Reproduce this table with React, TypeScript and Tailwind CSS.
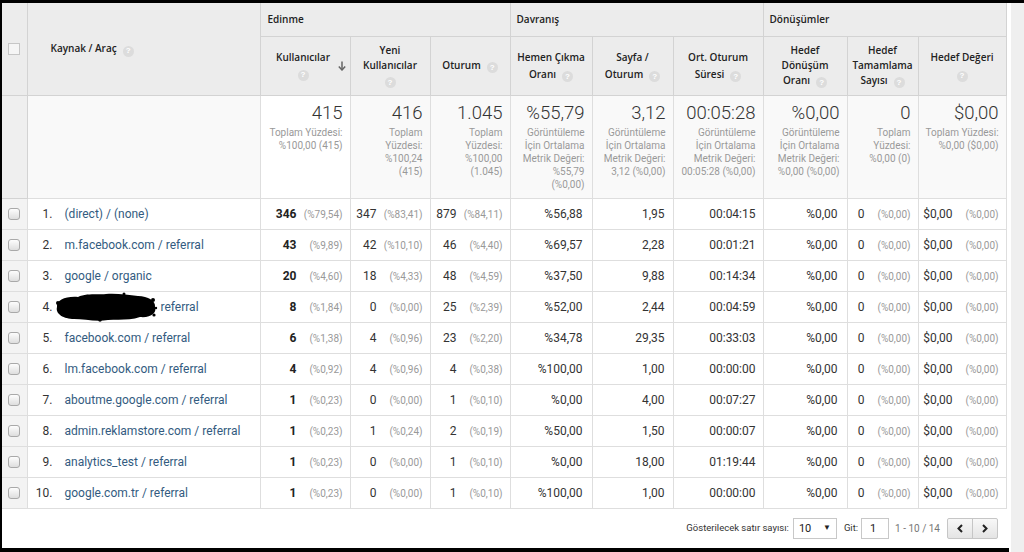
import React from "react";

type Row = {
  n: number;
  source: string | null;
  users: [string, string];
  newUsers: [string, string];
  sessions: [string, string];
  bounce: string;
  pages: string;
  duration: string;
};

const rows: Row[] = [
  { n: 1, source: "(direct) / (none)", users: ["346", "(%79,54)"], newUsers: ["347", "(%83,41)"], sessions: ["879", "(%84,11)"], bounce: "%56,88", pages: "1,95", duration: "00:04:15" },
  { n: 2, source: "m.facebook.com / referral", users: ["43", "(%9,89)"], newUsers: ["42", "(%10,10)"], sessions: ["46", "(%4,40)"], bounce: "%69,57", pages: "2,28", duration: "00:01:21" },
  { n: 3, source: "google / organic", users: ["20", "(%4,60)"], newUsers: ["18", "(%4,33)"], sessions: ["48", "(%4,59)"], bounce: "%37,50", pages: "9,88", duration: "00:14:34" },
  { n: 4, source: null, users: ["8", "(%1,84)"], newUsers: ["0", "(%0,00)"], sessions: ["25", "(%2,39)"], bounce: "%52,00", pages: "2,44", duration: "00:04:59" },
  { n: 5, source: "facebook.com / referral", users: ["6", "(%1,38)"], newUsers: ["4", "(%0,96)"], sessions: ["23", "(%2,20)"], bounce: "%34,78", pages: "29,35", duration: "00:33:03" },
  { n: 6, source: "lm.facebook.com / referral", users: ["4", "(%0,92)"], newUsers: ["4", "(%0,96)"], sessions: ["4", "(%0,38)"], bounce: "%100,00", pages: "1,00", duration: "00:00:00" },
  { n: 7, source: "aboutme.google.com / referral", users: ["1", "(%0,23)"], newUsers: ["0", "(%0,00)"], sessions: ["1", "(%0,10)"], bounce: "%0,00", pages: "4,00", duration: "00:07:27" },
  { n: 8, source: "admin.reklamstore.com / referral", users: ["1", "(%0,23)"], newUsers: ["1", "(%0,24)"], sessions: ["2", "(%0,19)"], bounce: "%50,00", pages: "1,50", duration: "00:00:07" },
  { n: 9, source: "analytics_test / referral", users: ["1", "(%0,23)"], newUsers: ["0", "(%0,00)"], sessions: ["1", "(%0,10)"], bounce: "%0,00", pages: "18,00", duration: "01:19:44" },
  { n: 10, source: "google.com.tr / referral", users: ["1", "(%0,23)"], newUsers: ["0", "(%0,00)"], sessions: ["1", "(%0,10)"], bounce: "%100,00", pages: "1,00", duration: "00:00:00" },
];

const totals = [
  { value: "415", lines: ["Toplam Yüzdesi:", "%100,00 (415)"], sorted: true },
  { value: "416", lines: ["Toplam", "Yüzdesi:", "%100,24", "(415)"] },
  { value: "1.045", lines: ["Toplam", "Yüzdesi:", "%100,00", "(1.045)"] },
  { value: "%55,79", lines: ["Görüntüleme", "İçin Ortalama", "Metrik Değeri:", "%55,79", "(%0,00)"] },
  { value: "3,12", lines: ["Görüntüleme", "İçin Ortalama", "Metrik Değeri:", "3,12 (%0,00)"] },
  { value: "00:05:28", lines: ["Görüntüleme", "İçin Ortalama", "Metrik Değeri:", "00:05:28 (%0,00)"] },
  { value: "%0,00", lines: ["Görüntüleme", "İçin Ortalama", "Metrik Değeri:", "%0,00 (%0,00)"] },
  { value: "0", lines: ["Toplam", "Yüzdesi:", "%0,00 (0)"] },
  { value: "$0,00", lines: ["Toplam Yüzdesi:", "%0,00 ($0,00)"] },
];

function Help() {
  return (
    <span className="ml-[6px] inline-flex h-[11px] w-[11px] items-center justify-center rounded-full bg-[#dcdcdc] align-[-1px] font-['Liberation_Sans',sans-serif] text-[8px] font-bold leading-none text-white">
      ?
    </span>
  );
}

function RowCheckbox() {
  return (
    <span className="block h-[12px] w-[12px] rounded-[3px] border border-[#a9a9a9] bg-[linear-gradient(180deg,#fdfdfd_0%,#dedede_100%)]" />
  );
}

function ValuePct({ value, pct, bold }: { value: string; pct: string; bold?: boolean }) {
  return (
    <div className="flex items-baseline justify-end pr-[7px]">
      <span className={bold ? "font-bold text-[#222]" : "text-[#333]"}>{value}</span>
      <span className="w-[46px] text-right text-[10px] text-[#999]">{pct}</span>
    </div>
  );
}

function Redacted() {
  return (
    <svg width="104" height="30" viewBox="0 0 104 30" className="ml-[-11px] shrink-0">
      <path
        d="M3 15 C2 8, 12 4, 24 5 C32 1, 44 3, 52 2 C62 1, 74 3, 84 4 C94 4, 102 9, 101 15 C103 21, 97 26, 86 25 C76 29, 64 27, 54 28 C42 30, 30 27, 20 27 C10 27, 1 22, 3 15 Z"
        fill="#000"
      />
      <circle cx="4" cy="11" r="2" fill="#000" />
      <circle cx="99" cy="8" r="2" fill="#000" />
      <circle cx="100" cy="23" r="1.6" fill="#000" />
      <circle cx="46" cy="28" r="1.8" fill="#000" />
      <circle cx="70" cy="2" r="1.5" fill="#000" />
      <circle cx="102" cy="16" r="1.2" fill="#000" />
    </svg>
  );
}

function SortArrow() {
  return (
    <svg width="8" height="10" viewBox="0 0 8 10" className="shrink-0">
      <path d="M4 0.5 V9" stroke="#666" strokeWidth="1.5" />
      <path d="M0.8 5.6 L4 9 L7.2 5.6" stroke="#666" strokeWidth="1.5" fill="none" />
    </svg>
  );
}

const th = "border-r border-b border-[#d3d3d3] bg-[#ececec] font-['Open_Sans',sans-serif] text-[10px] font-semibold text-[#222]";
const sub = "border-r border-b border-[#d3d3d3] bg-[#ececec] px-1 text-center align-middle font-['Open_Sans',sans-serif] text-[10px] font-semibold leading-[15px] text-[#222]";
const td = "h-[31px] border-r border-b border-[#dedede] p-0 align-middle";

export default function App() {
  return (
    <div className="flex h-[552px] w-[1024px] items-start overflow-hidden bg-black pt-[3px] pl-[2px] font-['Roboto',sans-serif]">
      <div className="flex h-[545px] w-[1007px] flex-col bg-white">
        <table className="w-[1004px] table-fixed border-collapse">
          <colgroup>
            <col className="w-[25px]" />
            <col className="w-[233px]" />
            <col className="w-[90px]" />
            <col className="w-[80px]" />
            <col className="w-[80px]" />
            <col className="w-[82px]" />
            <col className="w-[81px]" />
            <col className="w-[90px]" />
            <col className="w-[84px]" />
            <col className="w-[71px]" />
            <col className="w-[88px]" />
          </colgroup>
          <thead>
            <tr className="h-[33px]">
              <th rowSpan={2} className={`${th} p-0 align-middle`}>
                <span className="mx-auto block h-[12px] w-[12px] border border-[#c6c6c6] bg-[#f5f5f5]" />
              </th>
              <th rowSpan={2} className={`${th} pl-[23px] text-left align-middle`}>
                Kaynak / Araç
                <Help />
              </th>
              <th colSpan={3} className={`${th} pl-[7px] text-left align-middle`}>Edinme</th>
              <th colSpan={3} className={`${th} pl-[6px] text-left align-middle`}>Davranış</th>
              <th colSpan={3} className={`${th} pl-[6px] text-left align-middle`}>Dönüşümler</th>
            </tr>
            <tr className="h-[59px]">
              <th className={`${sub} pr-[4px]`}>
                <div className="flex items-center">
                  <div className="flex-1 pl-[4px]">
                    Kullanıcılar
                    <br />
                    <span className="-ml-[6px]"><Help /></span>
                  </div>
                  <SortArrow />
                </div>
              </th>
              <th className={sub}>
                Yeni
                <br />
                Kullanıcılar
                <br />
                <span className="-ml-[6px]"><Help /></span>
              </th>
              <th className={sub}>
                Oturum
                <Help />
              </th>
              <th className={`${sub} leading-[17px]`}>
                Hemen Çıkma
                <br />
                Oranı
                <Help />
              </th>
              <th className={`${sub} leading-[17px]`}>
                Sayfa /
                <br />
                Oturum
                <Help />
              </th>
              <th className={`${sub} leading-[17px]`}>
                Ort. Oturum
                <br />
                Süresi
                <Help />
              </th>
              <th className={sub}>
                Hedef
                <br />
                Dönüşüm
                <br />
                Oranı
                <Help />
              </th>
              <th className={sub}>
                Hedef
                <br />
                Tamamlama
                <br />
                Sayısı
                <Help />
              </th>
              <th className={`${sub} leading-[16px]`}>
                Hedef Değeri
                <br />
                <span className="-ml-[6px]"><Help /></span>
              </th>
            </tr>
          </thead>
          <tbody>
            <tr className="h-[103px]">
              <td className="border-r border-b border-[#d3d3d3] bg-[#efefef]" />
              <td className="border-r border-b border-[#dedede] bg-[#f9f9f9]" />
              {totals.map((t) => (
                <td
                  key={t.value}
                  className={`border-r border-b border-[#dedede] px-[7px] pt-[6px] text-right align-top ${t.sorted ? "bg-white" : "bg-[#f9f9f9]"}`}
                >
                  <div className="text-[18.5px] leading-[22px] font-light text-[#333]">{t.value}</div>
                  <div className="mt-[2px] text-[10px] leading-[13px] whitespace-nowrap text-[#999]">
                    {t.lines.map((l) => (
                      <div key={l}>{l}</div>
                    ))}
                  </div>
                </td>
              ))}
            </tr>
            {rows.map((r) => (
              <tr key={r.n} className="text-[12px]">
                <td className={`${td} bg-[#f3f3f3]`}>
                  <div className="flex justify-center">
                    <RowCheckbox />
                  </div>
                </td>
                <td className={td}>
                  <div className="flex items-center">
                    <span className="w-[25px] text-right text-[#333]">{r.n}.</span>
                    {r.source ? (
                      <span className="ml-[12px] whitespace-nowrap text-[#335b80]">{r.source}</span>
                    ) : (
                      <span className="ml-[12px] flex items-center whitespace-nowrap text-[#335b80]">
                        <Redacted />
                        <span className="ml-[3px]">referral</span>
                      </span>
                    )}
                  </div>
                </td>
                <td className={td}>
                  <ValuePct value={r.users[0]} pct={r.users[1]} bold />
                </td>
                <td className={td}>
                  <ValuePct value={r.newUsers[0]} pct={r.newUsers[1]} />
                </td>
                <td className={td}>
                  <ValuePct value={r.sessions[0]} pct={r.sessions[1]} />
                </td>
                <td className={`${td} pr-[9px] text-right text-[#333]`}>{r.bounce}</td>
                <td className={`${td} pr-[8px] text-right text-[#333]`}>{r.pages}</td>
                <td className={`${td} pr-[7px] text-right text-[#333]`}>{r.duration}</td>
                <td className={`${td} pr-[9px] text-right text-[#333]`}>%0,00</td>
                <td className={td}>
                  <ValuePct value="0" pct="(%0,00)" />
                </td>
                <td className={td}>
                  <ValuePct value="$0,00" pct="(%0,00)" />
                </td>
              </tr>
            ))}
          </tbody>
        </table>

        <div className="flex h-[40px] w-[1004px] items-center justify-end pr-[8px] text-[#333]">
          <span className="text-[9.5px]">Gösterilecek satır sayısı:</span>
          <div className="ml-[4px] flex h-[21px] w-[44px] items-center justify-between border border-[#c8c8c8] bg-white pr-[5px] pl-[5px] text-[11px] text-[#222]">
            <span className="mt-[2px]">10</span>
            <span className="text-[8px]">▼</span>
          </div>
          <span className="ml-[7px] text-[9.5px]">Git:</span>
          <div className="ml-[3px] flex h-[21px] w-[28px] items-center border border-[#c8c8c8] bg-white pl-[8px] text-[11px] text-[#222]">
            <span className="mt-[2px]">1</span>
          </div>
          <span className="ml-[6px] text-[10px] text-[#777]">1 - 10 / 14</span>
          <div className="ml-[7px] flex h-[21px] w-[51px] overflow-hidden rounded-[2px] border border-[#c6c6c6] bg-[linear-gradient(180deg,#f8f8f8_0%,#e4e4e4_100%)]">
            <div className="flex flex-1 items-center justify-center border-r border-[#c6c6c6]">
              <svg width="6" height="9" viewBox="0 0 6 9">
                <path d="M5 1 L1.5 4.5 L5 8" stroke="#222" strokeWidth="2" fill="none" />
              </svg>
            </div>
            <div className="flex flex-1 items-center justify-center">
              <svg width="6" height="9" viewBox="0 0 6 9">
                <path d="M1 1 L4.5 4.5 L1 8" stroke="#222" strokeWidth="2" fill="none" />
              </svg>
            </div>
          </div>
        </div>
      </div>
      <div className="h-[549px] w-[15px] border-l-2 border-white bg-[#efefef]" />
    </div>
  );
}
